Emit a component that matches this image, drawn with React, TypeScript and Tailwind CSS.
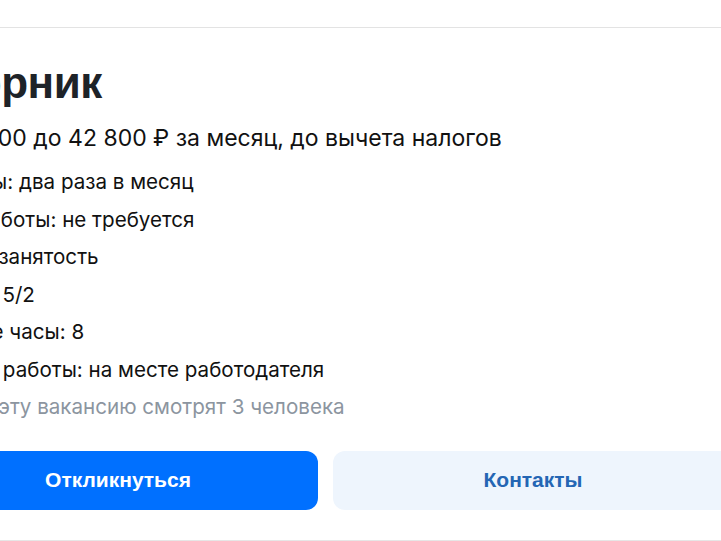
import React from 'react';

const details = [
  'Выплаты: два раза в месяц',
  'Опыт работы: не требуется',
  'Полная занятость',
  'График: 5/2',
  'Рабочие часы: 8',
  'Формат работы: на месте работодателя',
];

const App = () => {
  return (
    <div className="w-[721px] h-[541px] bg-white overflow-hidden flex flex-col">
      <div className="h-[28px] shrink-0 border-b border-[#e3e3e3]" />

      {/* vacancy card, cropped on the left */}
      <div className="flex-1 overflow-hidden">
        <div className="-ml-[82px] pt-[29px] flex flex-col">
          <h1 className="font-['Liberation_Sans',Arial,sans-serif] font-bold text-[44px] leading-[52px] text-[#1e2328] tracking-[-0.5px]">
            Дворник
          </h1>
          <p className="mt-[14px] font-['Inter',sans-serif] text-[23px] leading-[30px] text-[#111] whitespace-nowrap">
            от 38 500 до 42 800 ₽ за месяц, до вычета налогов
          </p>
          <ul className="mt-[10px] flex flex-col font-['Inter',sans-serif] text-[20.6px] leading-[37.5px] text-[#111] whitespace-nowrap">
            {details.map((d) => (
              <li key={d}>{d}</li>
            ))}
            <li className="text-[#8c959f]">Сейчас эту вакансию смотрят 3 человека</li>
          </ul>
          <div className="mt-[25px] flex gap-[15px]">
            <button
              type="button"
              className="shrink-0 w-[400px] h-[59px] rounded-[12px] bg-[#0070ff] text-white font-['Liberation_Sans',Arial,sans-serif] font-bold text-[21px]"
            >
              Откликнуться
            </button>
            <button
              type="button"
              className="shrink-0 w-[400px] h-[59px] rounded-[12px] bg-[#eef5fd] text-[#2466b4] font-['Liberation_Sans',Arial,sans-serif] font-bold text-[21px]"
            >
              Контакты
            </button>
          </div>
        </div>
      </div>
      <div className="h-[1px] shrink-0 bg-[#e6e6e6]" />
    </div>
  );
};

export default App;
